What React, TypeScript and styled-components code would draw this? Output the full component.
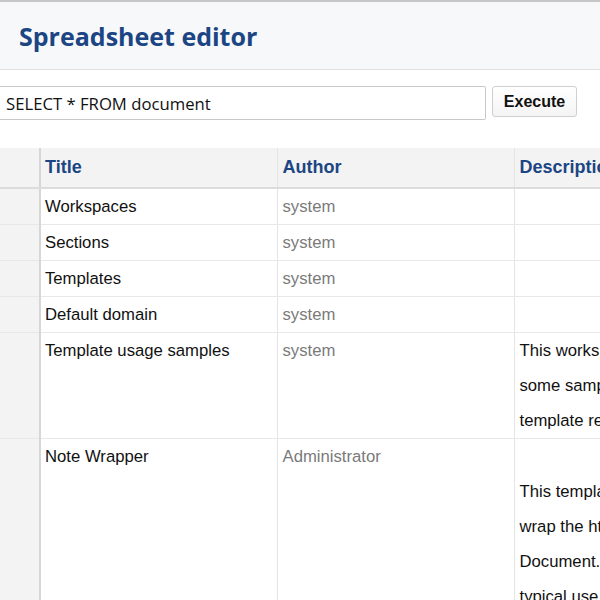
import React from "react";
import styled, { createGlobalStyle } from "styled-components";

const Global = createGlobalStyle`
  html, body { margin: 0; padding: 0; background: #fff; overflow: hidden; }
  body { font-family: "Liberation Sans", Arial, sans-serif; }
`;

const Page = styled.div`
  width: 600px;
  height: 600px;
  overflow: hidden;
  display: flex;
  flex-direction: column;
`;

const Header = styled.header`
  height: 67px;
  border-top: 2px solid #c6c6c6;
  border-bottom: 1px solid #e0e0e0;
  background: #f7f8fa;
  display: flex;
  align-items: center;
  padding-left: 19px;
  flex-shrink: 0;
`;

const Title = styled.h1`
  margin: 0;
  font-family: "Open Sans", sans-serif;
  font-weight: 700;
  font-size: 25px;
  color: #1b4583;
`;

const Toolbar = styled.div`
  display: flex;
  align-items: flex-start;
  gap: 6px;
  margin-top: 16px;
  flex-shrink: 0;
`;

const QueryInput = styled.input`
  box-sizing: border-box;
  width: 486px;
  height: 34px;
  border: 1px solid #c8c8c8;
  border-left: none;
  border-radius: 0 2px 2px 0;
  padding: 0 6px;
  font-family: "Open Sans", sans-serif;
  font-size: 16.7px;
  color: #111;
  outline: none;
  background: #fff;
`;

const Button = styled.button`
  box-sizing: border-box;
  width: 85px;
  height: 31px;
  border: 1px solid #cfcfcf;
  border-radius: 3px;
  background: linear-gradient(#ffffff, #f4f4f4);
  font-family: "Liberation Sans", Arial, sans-serif;
  font-weight: 700;
  font-size: 16px;
  color: #111;
  padding: 0;
`;

const TableWrap = styled.div`
  margin-top: 28px;
  overflow: hidden;
  flex: 1;
`;

const Table = styled.table`
  border-collapse: collapse;
  table-layout: fixed;
  width: 714px;
`;

const Th = styled.th<{ $lead?: boolean; $first?: boolean }>`
  box-sizing: border-box;
  height: 40px;
  background: #f3f3f3;
  border-bottom: 2px solid #dcdcdc;
  border-right: ${(p) => (p.$lead ? "2px solid #d6d6d6" : "1px solid #e4e4e4")};
  text-align: left;
  padding: 0 5px 0 ${(p) => (p.$first ? 4 : 5)}px;
  font-size: 18px;
  font-weight: 700;
  color: #1b4583;
  white-space: nowrap;
  overflow: hidden;
  vertical-align: middle;
`;

const Td = styled.td<{ $lead?: boolean; $muted?: boolean; $first?: boolean }>`
  padding: 0 5px 0 ${(p) => (p.$first ? 4 : 5)}px;
  vertical-align: top;
  line-height: 35px;
  font-size: 16.7px;
  color: ${(p) => (p.$muted ? "#7a7a7a" : "#111")};
  background: ${(p) => (p.$lead ? "#f3f3f3" : "#fff")};
  border-bottom: 1px solid #e8e8e8;
  border-right: ${(p) => (p.$lead ? "2px solid #d6d6d6" : "1px solid #e4e4e4")};
  white-space: nowrap;
  overflow: hidden;
`;

const Line = styled.div`
  height: 35px;
  white-space: nowrap;
`;

type Row = { title: string; author: string; desc: string[] };

const rows: Row[] = [
  { title: "Workspaces", author: "system", desc: [] },
  { title: "Sections", author: "system", desc: [] },
  { title: "Templates", author: "system", desc: [] },
  { title: "Default domain", author: "system", desc: [] },
  {
    title: "Template usage samples",
    author: "system",
    desc: ["This workspace contains", "some samples of", "template rendering."],
  },
  {
    title: "Note Wrapper",
    author: "Administrator",
    desc: ["", "This template is used to", "wrap the html of a", "Document. The", "typical use case is"],
  },
];

export default function App() {
  return (
    <Page>
      <Global />
      <Header>
        <Title>Spreadsheet editor</Title>
      </Header>
      <Toolbar>
        <QueryInput defaultValue="SELECT * FROM document" />
        <Button>Execute</Button>
      </Toolbar>
      <TableWrap>
        <Table>
          <colgroup>
            <col style={{ width: 40 }} />
            <col style={{ width: 237 }} />
            <col style={{ width: 237 }} />
            <col style={{ width: 200 }} />
          </colgroup>
          <thead>
            <tr>
              <Th $lead></Th>
              <Th $first>Title</Th>
              <Th>Author</Th>
              <Th>Description</Th>
            </tr>
          </thead>
          <tbody>
            {rows.map((r) => (
              <tr key={r.title}>
                <Td $lead></Td>
                <Td $first>{r.title}</Td>
                <Td $muted>{r.author}</Td>
                <Td>
                  {r.desc.length === 0 ? (
                    <Line />
                  ) : (
                    r.desc.map((d, i) => <Line key={i}>{d}</Line>)
                  )}
                </Td>
              </tr>
            ))}
          </tbody>
        </Table>
      </TableWrap>
    </Page>
  );
}
